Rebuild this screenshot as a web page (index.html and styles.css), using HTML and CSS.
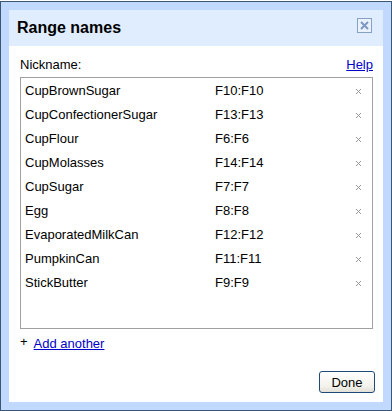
FILE: index.html
```html
<!DOCTYPE html>
<html lang="en">
<head>
  <meta charset="UTF-8">
  <title>Range names</title>
  <link rel="stylesheet" href="styles.css">
</head>
<body>
  <div class="dialog">
    <div class="dialog-title">
      <span>Range names</span>
      <span class="title-close">
        <svg width="15" height="15" viewBox="0 0 15 15">
          <rect x="0.5" y="0.5" width="14" height="14" fill="#e9f1fd" stroke="#86a0c6"/>
          <path d="M4 4 L11 11 M11 4 L4 11" stroke="#7d98c1" stroke-width="2"/>
        </svg>
      </span>
    </div>

    <div class="dialog-content">
      <div class="label-row">
        <span>Nickname:</span>
        <a href="#">Help</a>
      </div>

      <div class="range-list">
        <div class="range-row"><span class="range-name">CupBrownSugar</span><span class="range-ref">F10:F10</span><span class="range-del"><svg width="5" height="5" viewBox="0 0 5 5"><path d="M0 0 L5 5 M5 0 L0 5" stroke="#999" stroke-width="1"/></svg></span></div>
        <div class="range-row"><span class="range-name">CupConfectionerSugar</span><span class="range-ref">F13:F13</span><span class="range-del"><svg width="5" height="5" viewBox="0 0 5 5"><path d="M0 0 L5 5 M5 0 L0 5" stroke="#999" stroke-width="1"/></svg></span></div>
        <div class="range-row"><span class="range-name">CupFlour</span><span class="range-ref">F6:F6</span><span class="range-del"><svg width="5" height="5" viewBox="0 0 5 5"><path d="M0 0 L5 5 M5 0 L0 5" stroke="#999" stroke-width="1"/></svg></span></div>
        <div class="range-row"><span class="range-name">CupMolasses</span><span class="range-ref">F14:F14</span><span class="range-del"><svg width="5" height="5" viewBox="0 0 5 5"><path d="M0 0 L5 5 M5 0 L0 5" stroke="#999" stroke-width="1"/></svg></span></div>
        <div class="range-row"><span class="range-name">CupSugar</span><span class="range-ref">F7:F7</span><span class="range-del"><svg width="5" height="5" viewBox="0 0 5 5"><path d="M0 0 L5 5 M5 0 L0 5" stroke="#999" stroke-width="1"/></svg></span></div>
        <div class="range-row"><span class="range-name">Egg</span><span class="range-ref">F8:F8</span><span class="range-del"><svg width="5" height="5" viewBox="0 0 5 5"><path d="M0 0 L5 5 M5 0 L0 5" stroke="#999" stroke-width="1"/></svg></span></div>
        <div class="range-row"><span class="range-name">EvaporatedMilkCan</span><span class="range-ref">F12:F12</span><span class="range-del"><svg width="5" height="5" viewBox="0 0 5 5"><path d="M0 0 L5 5 M5 0 L0 5" stroke="#999" stroke-width="1"/></svg></span></div>
        <div class="range-row"><span class="range-name">PumpkinCan</span><span class="range-ref">F11:F11</span><span class="range-del"><svg width="5" height="5" viewBox="0 0 5 5"><path d="M0 0 L5 5 M5 0 L0 5" stroke="#999" stroke-width="1"/></svg></span></div>
        <div class="range-row"><span class="range-name">StickButter</span><span class="range-ref">F9:F9</span><span class="range-del"><svg width="5" height="5" viewBox="0 0 5 5"><path d="M0 0 L5 5 M5 0 L0 5" stroke="#999" stroke-width="1"/></svg></span></div>
      </div>

      <div class="add-row">
        <span class="plus">+</span>
        <a href="#">Add another</a>
      </div>

      <div class="buttons">
        <button class="done-button">Done</button>
      </div>
    </div>
  </div>
</body>
</html>
```

FILE: styles.css
```css
* {
  box-sizing: border-box;
}

body {
  margin: 0;
  background: #fff;
  font-family: "Liberation Sans", Arial, sans-serif;
  font-size: 13px;
  color: #000;
}

a {
  color: #00c;
  text-decoration: underline;
}

.dialog {
  margin-top: 1px;
  width: 392px;
  height: 410px;
  background: #c1d9ff;
  border: 1px solid #3a5774;
  padding: 8px;
  display: flex;
  flex-direction: column;
}

.dialog-title {
  background: #e0edfe;
  height: 36px;
  padding: 8px 10px 8px 8px;
  font-size: 16px;
  font-weight: bold;
  line-height: 20px;
  display: flex;
  justify-content: space-between;
  align-items: flex-start;
}

.title-close {
  display: block;
  width: 15px;
  height: 15px;
  margin-top: 0;
  margin-right: 1px;
}

.title-close svg {
  display: block;
}

.dialog-content {
  flex: 1;
  background: #fff;
  padding: 11px 10px 9px 11px;
  display: flex;
  flex-direction: column;
  line-height: 16px;
}

.label-row {
  display: flex;
  justify-content: space-between;
}

.range-list {
  margin-top: 4px;
  height: 252px;
  border: 1px solid #a0a0a0;
  padding-top: 1px;
}

.range-row {
  display: flex;
  align-items: center;
  height: 24px;
  padding: 0 11px 0 4px;
}

.range-name {
  width: 190px;
}

.range-ref {
  flex: 1;
}

.range-del svg {
  display: block;
}

.add-row {
  margin-top: 7px;
  display: flex;
}

.plus {
  margin-right: 6px;
  margin-top: -2px;
}

.buttons {
  margin-top: auto;
  display: flex;
  justify-content: flex-end;
  margin-right: -2px;
}

.done-button {
  width: 56px;
  height: 22px;
  padding: 0;
  font-family: "Liberation Sans", Arial, sans-serif;
  font-size: 13px;
  color: #000;
  border: 1px solid #1f4a78;
  border-radius: 3px;
  background: linear-gradient(#ffffff, #f3f2ec 70%, #e2e0d6);
}
```
